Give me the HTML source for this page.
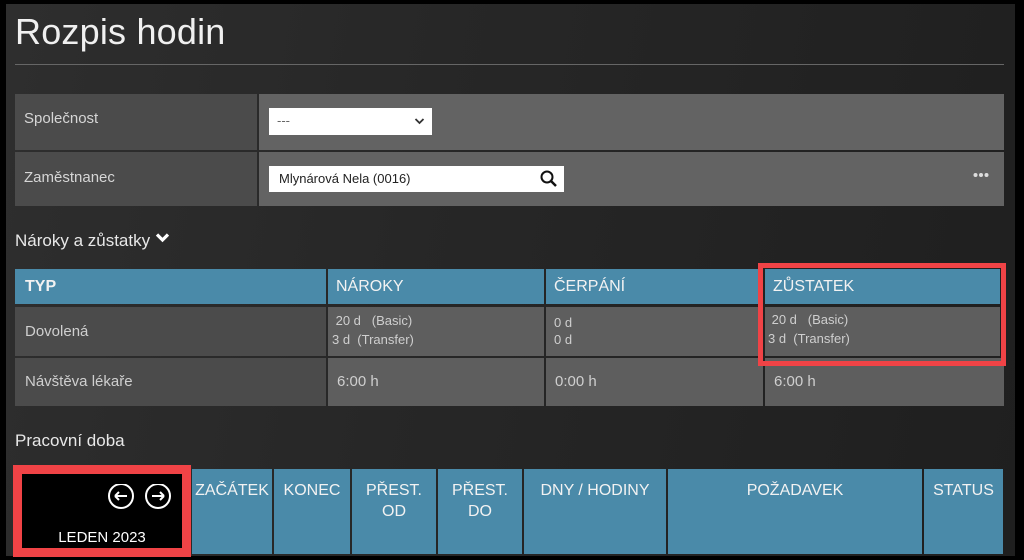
<!DOCTYPE html>
<html><head><meta charset="utf-8"><style>
*{margin:0;padding:0;box-sizing:border-box}
body{width:1024px;height:560px;background:#000;position:relative;overflow:hidden;font-family:"Liberation Sans",sans-serif}
.bg{position:absolute;left:6px;top:4px;right:9px;bottom:4px;background:linear-gradient(100deg,#2e2e2e 0%,#272727 40%,#1f1f1f 100%)}
.a{position:absolute}
.t{color:#ddd;font-size:15px}
.hd{background:#4a8aa9;color:#f2f2f2;font-size:16px;font-weight:normal}
.c{background:#5e5e5e;color:#cfcfcf}
.l{background:#4b4b4b;color:#cfcfcf}
.small{font-size:13px;line-height:19px;color:#cfcfcf}
.bh{background:#4a8aa9;color:#f2f2f2;font-size:16px;text-align:center;padding-top:11px;line-height:21px}
</style></head><body>
<div class="bg"></div>
<div class="a" style="left:15px;top:11px;font-size:36px;color:#f0f0f0;letter-spacing:0.2px">Rozpis hodin</div>
<div class="a" style="left:15px;top:64px;width:989px;height:1px;background:#666"></div>

<div class="a l" style="left:15px;top:94px;width:242px;height:56px"></div>
<div class="a c" style="left:259px;top:94px;width:745px;height:56px;background:#636363"></div>
<div class="a t" style="left:24px;top:110px;color:#d6d6d6">Společnost</div>
<div class="a" style="left:269px;top:108px;width:163px;height:27px;background:#fff;color:#666;font-size:13px;padding:5px 8px">---<svg style="position:absolute;right:7px;top:9px" width="11" height="8" viewBox="0 0 11 8"><path d="M1.5 2l4 4 4-4" fill="none" stroke="#333" stroke-width="1.8"/></svg></div>

<div class="a l" style="left:15px;top:152px;width:242px;height:54px"></div>
<div class="a c" style="left:259px;top:152px;width:745px;height:54px;background:#636363"></div>
<div class="a t" style="left:24px;top:169px;color:#d6d6d6">Zaměstnanec</div>
<div class="a" style="left:269px;top:166px;width:295px;height:26px;background:#fff;color:#222;font-size:13px;padding:5px 10px">Mlynárová Nela (0016)
<svg style="position:absolute;right:5px;top:3px" width="20" height="20" viewBox="0 0 20 20"><circle cx="8" cy="8" r="5.5" fill="none" stroke="#111" stroke-width="2"/><path d="M12 12l5 5" stroke="#111" stroke-width="2.5"/></svg></div>
<svg class="a" style="left:973px;top:172px" width="16" height="6" viewBox="0 0 16 6"><circle cx="2.5" cy="3" r="2" fill="#ddd"/><circle cx="8" cy="3" r="2" fill="#ddd"/><circle cx="13.5" cy="3" r="2" fill="#ddd"/></svg>

<div class="a" style="left:15px;top:231px;font-size:17px;color:#e8e8e8">Nároky a zůstatky <svg width="15" height="12" viewBox="0 0 15 12" style="vertical-align:2px"><path d="M2 2.5l5.5 5.5 5.5-5.5" fill="none" stroke="#fff" stroke-width="3.2"/></svg></div>

<div class="a hd" style="left:15px;top:269px;width:311px;height:35px;padding:9px 10px;font-weight:bold">TYP</div>
<div class="a hd" style="left:328px;top:269px;width:216px;height:35px;padding:9px 8px">NÁROKY</div>
<div class="a hd" style="left:546px;top:269px;width:217px;height:35px;padding:9px 8px">ČERPÁNÍ</div>
<div class="a hd" style="left:765px;top:269px;width:235px;height:35px;padding:9px 8px">ZŮSTATEK</div>

<div class="a l" style="left:15px;top:307px;width:311px;height:49px;padding:16px 10px;font-size:15px">Dovolená</div>
<div class="a c small" style="left:328px;top:307px;width:216px;height:49px;padding:4px 4px">&nbsp;20 d &nbsp;&nbsp;(Basic)<br>3 d &nbsp;(Transfer)</div>
<div class="a c small" style="left:546px;top:307px;width:217px;height:49px;padding:7px 8px;line-height:17px">0 d<br>0 d</div>
<div class="a c small" style="left:765px;top:307px;width:235px;height:49px;padding:3px 3px">&nbsp;20 d &nbsp;&nbsp;(Basic)<br>3 d &nbsp;(Transfer)</div>

<div class="a l" style="left:15px;top:358px;width:311px;height:48px;padding:15px 10px;font-size:15px">Návštěva lékaře</div>
<div class="a c" style="left:328px;top:358px;width:216px;height:48px;padding:15px 9px;font-size:15px">6:00 h</div>
<div class="a c" style="left:546px;top:358px;width:217px;height:48px;padding:15px 9px;font-size:15px">0:00 h</div>
<div class="a c" style="left:765px;top:358px;width:239px;height:48px;padding:15px 9px;font-size:15px">6:00 h</div>

<div class="a" style="left:758px;top:263px;width:248px;height:103px;border:5px solid #f04346"></div>

<div class="a" style="left:15px;top:431px;font-size:17px;color:#e8e8e8">Pracovní doba</div>

<div class="a" style="left:13px;top:465px;width:178px;height:92px;background:#f04346"></div>
<div class="a" style="left:22px;top:474px;width:160px;height:74px;background:#000"></div>
<svg class="a" style="left:106px;top:484px" width="68" height="26" viewBox="0 0 68 26"><circle cx="15" cy="12" r="12" fill="none" stroke="#fff" stroke-width="2"/><path d="M9 12h12M9 12l4-4M9 12l4 4" stroke="#fff" stroke-width="2" fill="none"/><circle cx="52" cy="12" r="12" fill="none" stroke="#fff" stroke-width="2"/><path d="M46 12h12M58 12l-4-4M58 12l-4 4" stroke="#fff" stroke-width="2" fill="none"/></svg>
<div class="a" style="left:22px;top:529px;width:160px;text-align:center;color:#fff;font-size:15px">LEDEN 2023</div>

<div class="a bh" style="left:192px;top:469px;width:80px;height:85px">ZAČÁTEK</div>
<div class="a bh" style="left:274px;top:469px;width:76px;height:85px">KONEC</div>
<div class="a bh" style="left:352px;top:469px;width:84px;height:85px">PŘEST.<br>OD</div>
<div class="a bh" style="left:438px;top:469px;width:84px;height:85px">PŘEST.<br>DO</div>
<div class="a bh" style="left:524px;top:469px;width:142px;height:85px">DNY / HODINY</div>
<div class="a bh" style="left:668px;top:469px;width:254px;height:85px">POŽADAVEK</div>
<div class="a bh" style="left:924px;top:469px;width:79px;height:85px">STATUS</div>
</body></html>
